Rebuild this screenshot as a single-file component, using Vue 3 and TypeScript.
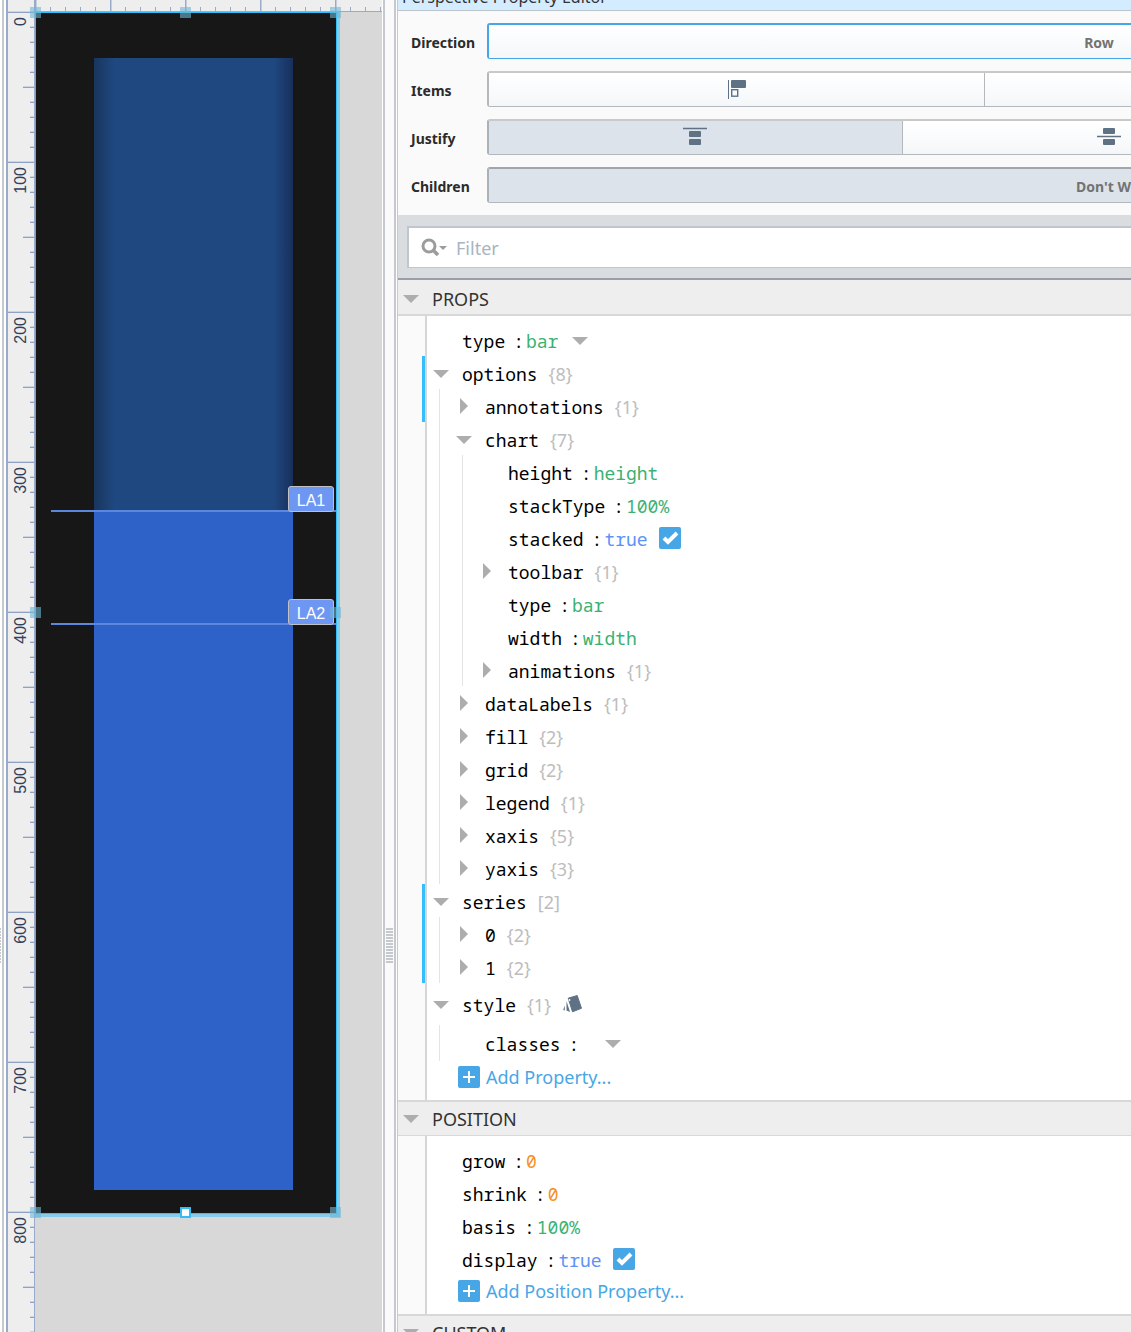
<script setup lang="ts">
import { ref } from 'vue'

type ValueKind = 'string' | 'boolean' | 'number'

interface PropertyRow {
  name: string
  depth: number
  state?: 'open' | 'closed'
  count?: string
  value?: string
  kind?: ValueKind
  menu?: boolean
  styled?: boolean
  changed?: boolean
  size?: 'tall' | 'medium'
}

interface Section {
  title: string
  addLabel?: string
  rows: PropertyRow[]
}

const rulerMarks = [0, 100, 200, 300, 400, 500, 600, 700, 800]
const limits = ['LA1', 'LA2']
const handles = ['nw', 'n', 'ne', 'w', 'e', 'sw', 's', 'se']
const filter = ref('')

const sections: Section[] = [
  {
    title: 'PROPS',
    addLabel: 'Add Property...',
    rows: [
      { name: 'type', depth: 0, value: 'bar', kind: 'string', menu: true },
      { name: 'options', depth: 0, state: 'open', count: '{8}', changed: true },
      { name: 'annotations', depth: 1, state: 'closed', count: '{1}', changed: true },
      { name: 'chart', depth: 1, state: 'open', count: '{7}' },
      { name: 'height', depth: 2, value: 'height', kind: 'string' },
      { name: 'stackType', depth: 2, value: '100%', kind: 'string' },
      { name: 'stacked', depth: 2, value: 'true', kind: 'boolean' },
      { name: 'toolbar', depth: 2, state: 'closed', count: '{1}' },
      { name: 'type', depth: 2, value: 'bar', kind: 'string' },
      { name: 'width', depth: 2, value: 'width', kind: 'string' },
      { name: 'animations', depth: 2, state: 'closed', count: '{1}' },
      { name: 'dataLabels', depth: 1, state: 'closed', count: '{1}' },
      { name: 'fill', depth: 1, state: 'closed', count: '{2}' },
      { name: 'grid', depth: 1, state: 'closed', count: '{2}' },
      { name: 'legend', depth: 1, state: 'closed', count: '{1}' },
      { name: 'xaxis', depth: 1, state: 'closed', count: '{5}' },
      { name: 'yaxis', depth: 1, state: 'closed', count: '{3}' },
      { name: 'series', depth: 0, state: 'open', count: '[2]', changed: true },
      { name: '0', depth: 1, state: 'closed', count: '{2}', changed: true },
      { name: '1', depth: 1, state: 'closed', count: '{2}', changed: true },
      { name: 'style', depth: 0, state: 'open', count: '{1}', styled: true, size: 'tall' },
      { name: 'classes', depth: 1, value: '', kind: 'string', menu: true, size: 'medium' },
    ],
  },
  {
    title: 'POSITION',
    addLabel: 'Add Position Property...',
    rows: [
      { name: 'grow', depth: 0, value: '0', kind: 'number' },
      { name: 'shrink', depth: 0, value: '0', kind: 'number' },
      { name: 'basis', depth: 0, value: '100%', kind: 'string' },
      { name: 'display', depth: 0, value: 'true', kind: 'boolean' },
    ],
  },
  { title: 'CUSTOM', rows: [] },
]
</script>

<template>
  <div class="designer">
    <div class="edge"><span class="grip"></span></div>

    <main class="workspace">
      <div class="ruler-top"></div>
      <div class="work-body">
        <div class="ruler-side">
          <div v-for="mark in rulerMarks" :key="mark" class="mark"><span>{{ mark }}</span></div>
        </div>
        <div class="canvas">
          <div class="component">
            <div class="tank">
              <div class="empty"></div>
              <div class="filled"></div>
            </div>
            <div v-for="limit in limits" :key="limit" class="limit" :class="limit.toLowerCase()">
              <span>{{ limit }}</span>
            </div>
            <i v-for="h in handles" :key="h" class="handle" :class="h"></i>
          </div>
        </div>
      </div>
    </main>

    <div class="splitter"><span class="grip"></span></div>

    <aside class="editor">
      <header class="title"><h1>Perspective Property Editor</h1></header>

      <div class="form">
        <div class="field">
          <span class="label" id="l-direction">Direction</span>
          <div class="group focused" role="group" aria-labelledby="l-direction">
            <button type="button" class="direction">Row</button>
            <button type="button">Column</button>
          </div>
        </div>
        <div class="field">
          <span class="label" id="l-items">Items</span>
          <div class="group" role="group" aria-labelledby="l-items">
            <button type="button" aria-label="Start">
              <svg width="18" height="20" viewBox="0 0 18 20">
                <path d="M.5 1v19" stroke="#5f7285" />
                <rect x="3" y="1" width="15" height="8" rx="1" fill="#5f7285" />
                <rect x="3.700" y="10.700" width="6" height="6.500" fill="none" stroke="#5f7285" stroke-width="1.400" />
              </svg>
            </button>
            <button v-for="n in 4" :key="n" type="button" :aria-label="'Align ' + n"></button>
          </div>
        </div>
        <div class="field">
          <span class="label" id="l-justify">Justify</span>
          <div class="group" role="group" aria-labelledby="l-justify">
            <button type="button" class="on" aria-label="Start">
              <svg width="24" height="20" viewBox="0 0 24 20">
                <path d="M0 1.500h24" stroke="#5f7285" stroke-width="1.500" />
                <rect x="6" y="4" width="12" height="6" rx="1" fill="#5f7285" />
                <rect x="6" y="12" width="12" height="6" rx="1" fill="#5f7285" />
              </svg>
            </button>
            <button type="button" aria-label="Center">
              <svg width="24" height="20" viewBox="0 0 24 20">
                <path d="M0 9.500h24" stroke="#5f7285" stroke-width="1.500" />
                <rect x="6" y="1" width="12" height="6" rx="1" fill="#5f7285" />
                <rect x="6" y="12" width="12" height="6" rx="1" fill="#5f7285" />
              </svg>
            </button>
            <button v-for="n in 4" :key="n" type="button" :aria-label="'Justify ' + n"></button>
          </div>
        </div>
        <div class="field">
          <span class="label" id="l-children">Children</span>
          <div class="group" role="group" aria-labelledby="l-children">
            <button type="button" class="on wrapping">Don't Wrap</button>
            <button type="button">Wrap</button>
          </div>
        </div>
      </div>

      <div class="filter-bar">
        <label class="filter">
          <svg width="27" height="20" viewBox="0 0 27 20" aria-hidden="true">
            <circle cx="8" cy="8" r="6" fill="none" stroke="#9c9c9c" stroke-width="3" />
            <path d="M12 12l5 5" stroke="#9c9c9c" stroke-width="3.500" />
            <path d="M18 8h8l-4 4z" fill="#9c9c9c" />
          </svg>
          <input v-model="filter" type="text" placeholder="Filter" aria-label="Filter" />
        </label>
      </div>

      <section v-for="section in sections" :key="section.title" class="section">
        <h2>
          <svg width="16" height="8" viewBox="0 0 16 8"><path d="M0 0h16l-8 8z" fill="#adadad" /></svg>
          {{ section.title }}
        </h2>
        <div class="tree">
          <ul>
            <li
              v-for="(row, i) in section.rows"
              :key="i"
              :class="[row.size, { changed: row.changed }]"
            >
              <i v-for="n in row.depth" :key="n" class="guide"></i>
              <button v-if="row.state" type="button" class="toggle" :aria-label="'Toggle ' + row.name">
                <svg v-if="row.state === 'open'" width="16" height="10" viewBox="0 0 16 10">
                  <path d="M0 2h16l-8 8z" fill="#adadad" />
                </svg>
                <svg v-else width="8" height="16" viewBox="0 0 8 16">
                  <path d="M0 0v16l8-8z" fill="#adadad" />
                </svg>
              </button>
              <span v-else class="toggle"></span>
              <span class="name">{{ row.name }}</span>
              <span v-if="row.count" class="count">{{ row.count }}</span>
              <template v-else>
                <span class="colon">:</span>
                <span class="value" :class="row.kind">{{ row.value }}</span>
              </template>
              <input
                v-if="row.kind === 'boolean'"
                type="checkbox"
                checked
                :aria-label="row.name"
              />
              <button v-if="row.menu" type="button" class="menu" :aria-label="'Choose ' + row.name">
                <svg width="16" height="10" viewBox="0 0 16 10"><path d="M0 2h16l-8 8z" fill="#adadad" /></svg>
              </button>
              <svg v-if="row.styled" class="swatch" width="20" height="20" viewBox="0 0 20 20">
                <path
                  d="M5.200 4.200L14.200 1.500l4.300 12.800-9 3.500z"
                  fill="#5f7285"
                  stroke="#5f7285"
                  stroke-linejoin="round"
                />
                <circle cx="6.500" cy="6" r=".9" fill="#fff" />
                <path d="M3.500 7l3.500 11-3.500-1.500zM1.800 11.500v5l-1.600-.5z" fill="#5f7285" />
              </svg>
            </li>
          </ul>
          <button v-if="section.addLabel" type="button" class="add">
            <svg width="22" height="22" viewBox="0 0 22 22">
              <rect width="22" height="22" rx="2" fill="#47a6e6" />
              <path d="M11 5v12M5 11h12" stroke="#fff" stroke-width="2" />
            </svg>
            {{ section.addLabel }}
          </button>
        </div>
      </section>
    </aside>
  </div>
</template>

<style>
body {
  margin: 0;
}
</style>

<style scoped>
.designer {
  display: flex;
  height: 100vh;
  overflow: hidden;
  background: #fff;
  font-family: 'Noto Sans', 'Open Sans', sans-serif;
}
.designer * {
  box-sizing: border-box;
}
button {
  margin: 0;
  padding: 0;
  border: 0;
  background: none;
  font: inherit;
}
svg {
  display: block;
  flex: none;
}

.edge {
  flex: none;
  display: flex;
  align-items: center;
  width: 6px;
  padding-top: 558px;
  border-right: 2px solid #fff;
  box-shadow: inset -2px 0 #c5c9cd;
}
.edge .grip {
  width: 1px;
}
.grip {
  height: 35px;
  background: repeating-linear-gradient(#c5c9ce 0 2px, transparent 2px 3px);
}

.workspace {
  flex: none;
  display: flex;
  flex-direction: column;
  width: 376px;
  border-left: 2px solid #9aaac9;
  background: #eee;
}
.ruler-top {
  flex: none;
  height: 13px;
  border-bottom: 2px solid #9aaac9;
  background:
    linear-gradient(#9aaac9, #9aaac9) 26px 0 / 1px 100% no-repeat,
    repeating-linear-gradient(90deg, #9aaac9 0 1px, #c4cde0 1px 2px, transparent 2px 75px) 27px 0 / 100% 100% no-repeat,
    repeating-linear-gradient(90deg, #9aaac9 0 1px, transparent 1px 15px) 27px 7px / 100% 4px no-repeat;
}
.work-body {
  flex: 1;
  display: flex;
  min-height: 0;
}
.ruler-side {
  flex: none;
  width: 28px;
  margin-top: -2px;
  overflow: hidden;
  border-right: 2px solid #9aaac9;
}
.mark {
  display: flex;
  height: 150px;
  padding: 6px 0 0 3px;
  background:
    linear-gradient(#cdd5e3 0 1px, #8fa1c5 1px 2px) 0 0 / 100% 2px no-repeat,
    linear-gradient(#cdd5e3 0 1px, #8fa1c5 1px 2px) right 75px / 11px 2px no-repeat,
    repeating-linear-gradient(#cdd5e3 0 1px, #8fa1c5 1px 2px, transparent 2px 15px) right top / 4px 100% no-repeat;
}
.mark span {
  align-self: flex-start;
  writing-mode: vertical-rl;
  transform: rotate(180deg);
  font: 16px/20px 'Liberation Sans', Arial, sans-serif;
  color: #33415c;
}
.canvas {
  flex: 1;
  background: #d8d8d8;
  margin: -1px 0 0 -1px;
}
.component {
  position: relative;
  width: 305px;
  height: 1205px;
  padding: 46px 0 0 59px;
  border: solid #87cbe9;
  border-width: 0 3px 3px 0;
  background: #171717;
  box-shadow:
    inset 1px 1px #33bdf7,
    inset -1px -1px #33bdf7;
}
.tank {
  display: flex;
  flex-direction: column;
  width: 199px;
  height: 1132px;
}
.empty {
  flex: 2;
  background: linear-gradient(90deg, #18365c, #1f4780 20px, #1f4780 180px, #18305a);
}
.filled {
  flex: 3;
  background: #2e62c9;
}
.limit {
  position: absolute;
  left: 16px;
  right: 1px;
  height: 26px;
  border-bottom: 2px solid #5c87dc;
  display: flex;
  justify-content: flex-end;
  padding-right: 2px;
}
.limit.la1 {
  top: 474px;
}
.limit.la2 {
  top: 587px;
}
.limit span {
  height: 26px;
  width: 46px;
  border: 1px solid #c2c2c2;
  border-radius: 3px;
  background: #6d97f2;
  color: #fff;
  text-align: center;
  font: 16px/28px 'Liberation Sans', Arial, sans-serif;
}
.handle {
  position: absolute;
  width: 11px;
  height: 11px;
  background: rgba(108, 184, 214, 0.6);
}
.nw,
.w,
.sw {
  left: -5px;
}
.n,
.s {
  left: 145px;
}
.ne,
.e,
.se {
  right: -4px;
}
.nw,
.n,
.ne {
  top: -5px;
}
.w,
.e {
  top: 595px;
}
.sw,
.s,
.se {
  bottom: -4px;
}
.s {
  border: 2px solid #33bdf7;
  background: #fff;
}

.splitter {
  flex: none;
  display: flex;
  align-items: center;
  justify-content: center;
  width: 13px;
  padding-top: 558px;
  border: solid #c5c9ce;
  border-width: 0 2px;
  background: #fafafa;
  margin: 0 1px;
}
.splitter .grip {
  width: 7px;
}

.editor {
  flex: 1;
  min-width: 0;
  overflow: hidden;
  border-left: 1px solid #c5c9ce;
  background: #fff;
}
.title {
  display: flex;
  align-items: flex-end;
  height: 11px;
  padding-left: 4px;
  overflow: hidden;
  border-bottom: 1px solid #bcc4cc;
  background: #d3ecff;
}
.title h1 {
  margin: 0;
  font-size: 16px;
  line-height: 26px;
  font-weight: 400;
  color: #333;
}
.form {
  display: flex;
  flex-direction: column;
  gap: 12px;
  padding: 12px 0 12px 13px;
  background: #fafafa;
}
.field {
  display: flex;
  align-items: center;
}
.label {
  flex: none;
  width: 76px;
  font-size: 14px;
  font-weight: 700;
  color: #2b2b2b;
  padding-top: 2px;
}
.group {
  flex: none;
  display: flex;
  width: 2484px;
  height: 36px;
  overflow: hidden;
  border: 1px solid #b4b8bc;
  border-top: 2px solid #c8caca;
  border-left-width: 2px;
  border-radius: 3px;
}
.group.focused {
  border-color: #47a6e6;
}
.group button {
  flex: 1;
  display: flex;
  align-items: center;
  justify-content: center;
  background: linear-gradient(#fff, #f4f7f9);
  font-size: 14px;
  font-weight: 700;
  color: #737373;
  padding-top: 2px;
}
.group button + button {
  border-left: 1px solid #b4b8bc;
}
.group svg {
  margin-bottom: 4px;
}
.group .direction {
  padding-right: 40px;
}
.group .wrapping {
  padding-left: 8px;
}
.group button.on {
  background: #dce3ea;
  box-shadow: 0 -2px #9fa6ad;
}
.group:has(.on) {
  border-left-color: #a9b1b9;
}
.group:has(.wrapping) {
  border-top-color: #a0a6ac;
}
.filter-bar {
  padding: 11px 0 10px 9px;
  border-bottom: 2px solid #9a9ea6;
  background: #dadddf;
}
.filter {
  display: flex;
  align-items: center;
  height: 42px;
  padding-left: 12px;
  border: solid #c0c6cb;
  border-width: 2px 0 1px 2px;
  background: #fff;
}
.filter input {
  flex: 1;
  border: 0;
  outline: 0;
  padding: 0 0 0 8px;
  background: none;
  font: 18px/24px 'Noto Sans', sans-serif;
}
.filter input::placeholder {
  color: #a8b4bf;
  opacity: 1;
}

.section h2 {
  display: flex;
  align-items: center;
  gap: 13px;
  height: 36px;
  margin: 0;
  padding: 3px 0 0 5px;
  border-bottom: 2px solid #d8d8d8;
  background: #eee;
  font-size: 18px;
  font-weight: 400;
  color: #333;
}
.section + .section h2 {
  padding-top: 1px;
  border-top: 2px solid #d8d8d8;
  border-bottom-width: 1px;
}
.tree {
  margin-left: 27px;
  padding: 7px 0 8px 6px;
  border-left: 2px solid #d6d6d6;
  background: #fff;
  box-shadow: -27px 0 #fafafa;
}
.tree ul {
  margin: 0;
  padding: 0;
  list-style: none;
}
.tree li {
  position: relative;
  display: flex;
  align-items: center;
  height: 33px;
  font: 18px/24px 'Noto Sans Mono', 'DejaVu Sans Mono', monospace;
  color: #000;
}
.tree li.tall {
  height: 42px;
}
.tree li.medium {
  height: 36px;
}
.tree li.changed::before {
  content: '';
  position: absolute;
  left: -11px;
  top: 0;
  bottom: 0;
  width: 3px;
  background: #36bdfb;
}
.guide {
  flex: none;
  align-self: stretch;
  width: 17px;
  margin-left: 6px;
  border-left: 1px solid #e4e4e4;
}
.toggle {
  flex: none;
  display: flex;
  justify-content: center;
  width: 16px;
  margin-right: 13px;
}
.name,
.colon,
.value,
.count {
  padding-top: 2px;
}
.colon {
  padding-left: 8px;
  padding-right: 2px;
}
.value {
  min-width: 10px;
}
.string {
  color: #3bb273;
}
.boolean {
  color: #5c93f7;
}
.number {
  color: #f78f1e;
}
.count {
  padding-left: 11px;
  font-family: 'Noto Sans', sans-serif;
  color: #bdbdbd;
}
.menu {
  margin-left: 14px;
}
.swatch {
  margin-left: 12px;
}
.tree input {
  appearance: none;
  width: 22px;
  height: 22px;
  margin: 0 0 0 11px;
  border-radius: 2px;
  background: #47a6e6
    url("data:image/svg+xml,%3Csvg xmlns='http://www.w3.org/2000/svg' viewBox='0 0 22 22'%3E%3Cpath d='M5 11l4 4 9-9' fill='none' stroke='%23fff' stroke-width='4'/%3E%3C/svg%3E");
}
.add {
  display: flex;
  align-items: center;
  gap: 6px;
  height: 31px;
  margin-left: 25px;
  font-size: 18px;
  color: #47a6e6;
}
</style>
